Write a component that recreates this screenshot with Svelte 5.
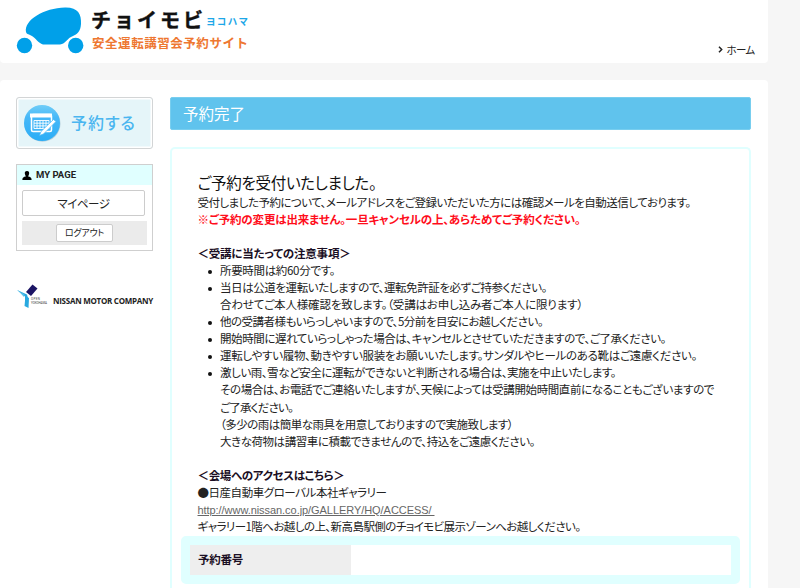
<script>
  const notes = [
    [{ text: '所要時間は約60分です。', width: 115 }],
    [
      { text: '当日は公道を運転いたしますので、運転免許証を必ずご持参ください。', width: 327 },
      { text: '合わせてご本人様確認を致します。（受講はお申し込み者ご本人に限ります）', width: 363 },
    ],
    [{ text: '他の受講者様もいらっしゃいますので、5分前を目安にお越しください。', width: 323 }],
    [{ text: '開始時間に遅れていらっしゃった場合は、キャンセルとさせていただきますので、ご了承ください。', width: 446 }],
    [{ text: '運転しやすい履物、動きやすい服装をお願いいたします。サンダルやヒールのある靴はご遠慮ください。', width: 477 }],
    [
      { text: '激しい雨、雪など安全に運転ができないと判断される場合は、実施を中止いたします。', width: 396 },
      { text: 'その場合は、お電話でご連絡いたしますが、天候によっては受講開始時間直前になることもございますので', width: 494 },
      { text: 'ご了承ください。', width: 73 },
      { text: '（多少の雨は簡単な雨具を用意しておりますので実施致します）', width: 293 },
      { text: '大きな荷物は講習車に積載できませんので、持込をご遠慮ください。', width: 315 },
    ],
  ];

  // spread the characters so that the line takes the given width
  function fit(node, width) {
    requestAnimationFrame(() => {
      const natural = node.getBoundingClientRect().width;
      const count = [...node.textContent].length;
      node.style.letterSpacing = `${(width - natural) / count}px`;
    });
  }
</script>

<header class="header">
  <svg class="logo" width="240" height="58" viewBox="0 -6 240 58">
    <g fill="#00a0e9">
      <circle cx="8.500" cy="39.500" r="7.700" />
      <circle cx="59.700" cy="39.500" r="7.700" />
      <path d="M10 26 C8 14 28 2 49 1.500 C62 1.200 65.500 8 65 18 C64.500 26 61 28 57 30 C51 32 50 38 44 38.500 L27 38.500 C22 37 20 32 15 29.500 C12 28 10.500 28 10 26 Z" />
    </g>
    <text class="logo-name" x="75" y="22" textLength="112">チョイモビ</text>
    <text class="logo-area" x="190" y="18.500" textLength="42">ヨコハマ</text>
    <text class="logo-sub" x="76" y="41.500" textLength="156">安全運転講習会予約サイト</text>
  </svg>
  <a class="home" href="#home">
    <svg width="5" height="7" viewBox="0 0 5 7"><path d="M1 .7 L3.700 3.500 L1 6.300" fill="none" stroke="#222" stroke-width="1.500" /></svg>
    <span use:fit={28}>ホーム</span>
  </a>
</header>

<div class="page">
  <aside class="side">
    <a class="reserve" href="#reserve">
      <svg width="40" height="40" viewBox="0 0 40 40">
        <defs>
          <linearGradient id="disc" x1="0" y1="0" x2="0" y2="1">
            <stop offset="0" stop-color="#6fcdf8" />
            <stop offset="0.350" stop-color="#46b8f8" />
            <stop offset="1" stop-color="#2badf6" />
          </linearGradient>
        </defs>
        <circle cx="20.500" cy="20.700" r="18" fill="#b5cfdb" />
        <circle cx="20" cy="20" r="18" fill="url(#disc)" />
        <rect x="9.500" y="11.500" width="20" height="17" rx="1.500" fill="#43b6f7" stroke="#fff" stroke-width="1.500" />
        <path d="M8 10.500 H30 V14.500 H8 Z" fill="#fff" />
        <path d="M12 17.500 H27 V25.500 H12 Z M12 20.200 H27 M12 22.900 H27 M15 17.500 V25.500 M18 17.500 V25.500 M21 17.500 V25.500 M24 17.500 V25.500" fill="none" stroke="#fff" stroke-width=".9" />
        <path d="M34 18.500 L21.500 31 L17.500 32.500 L19 28.500 L31.500 16.500 Z" fill="#fff" stroke="#43b6f7" stroke-width=".7" />
      </svg>
      <span use:fit={65}>予約する</span>
    </a>

    <section class="mypage">
      <h2>
        <svg width="10" height="9" viewBox="0 0 10 9"><path d="M5 0 C7 0 7.600 1.500 7 3.300 C6.700 4.500 6.300 4.700 6.300 5.500 C8 6 9.600 6.200 9.600 9 H.4 C.4 6.200 2 6 3.700 5.500 C3.700 4.700 3.300 4.500 3 3.300 C2.400 1.500 3 0 5 0 Z" /></svg>
        <span use:fit={40}>MY PAGE</span>
      </h2>
      <a class="my-button" href="#mypage"><span use:fit={52}>マイページ</span></a>
      <div class="logout">
        <a href="#logout"><span use:fit={39}>ログアウト</span></a>
      </div>
    </section>

    <div class="sponsors">
      <svg width="31" height="25" viewBox="0 0 31 25">
        <path d="M15.500 .5 L20.500 4.500 L14 12 L9 8 Z" fill="#1b1464" />
        <path d="M0 6 L10 10.500 L11 14 L8 22 L8 12.500 Z" fill="#2aa7df" />
        <path d="M.5 6 L7.500 10.500 L7 13 Z" fill="#55bfe8" />
        <path d="M8.500 12 L12 14 L11.500 24 L7.500 22 Z" fill="#29a9e0" />
        <text class="tiny" x="14" y="16" textLength="9">OPEN</text>
        <text class="tiny" x="14" y="20" textLength="16">YOKOHAMA</text>
      </svg>
      <span class="nissan" use:fit={100}>NISSAN MOTOR COMPANY</span>
    </div>
  </aside>

  <main class="main">
    <h1><span use:fit={62}>予約完了</span></h1>

    <div class="box">
      <div class="message">
        <p class="lead"><span use:fit={179}>ご予約を受付いたしました。</span></p>
        <p><span use:fit={493}>受付しました予約について、メールアドレスをご登録いただいた方には確認メールを自動送信しております。</span></p>
        <p class="warn"><span use:fit={383}>※ご予約の変更は出来ません。一旦キャンセルの上、あらためてご予約ください。</span></p>

        <h3><span use:fit={153}>＜受講に当たっての注意事項＞</span></h3>
        <ul>
          {#each notes as lines}
            <li>
              {#each lines as line}
                <div><span use:fit={line.width}>{line.text}</span></div>
              {/each}
            </li>
          {/each}
        </ul>

        <h3><span use:fit={147}>＜会場へのアクセスはこちら＞</span></h3>
        <p><span use:fit={189}>●日産自動車グローバル本社ギャラリー</span></p>
        <p><a class="access" href="#access" use:fit={237}>http://www.nissan.co.jp/GALLERY/HQ/ACCESS/&nbsp;</a></p>
        <p><span use:fit={383}>ギャラリー1階へお越しの上、新高島駅側のチョイモビ展示ゾーンへお越しください。</span></p>
      </div>

      <dl class="number">
        <dt><span use:fit={45}>予約番号</span></dt>
        <dd></dd>
      </dl>
    </div>
  </main>
</div>

<style>
  :global(body) {
    background: #f6f6f6;
    color: #222;
    font-family: 'Noto Sans CJK JP', sans-serif;
    font-size: 11.5px;
    line-height: 17.06px;
    font-feature-settings: 'palt';
  }

  h1, h2, h3, p, ul, dl, dd {
    margin: 0;
    padding: 0;
    font-size: inherit;
  }

  span, .access {
    white-space: nowrap;
  }

  a {
    color: inherit;
    text-decoration: none;
  }

  svg {
    display: block;
    flex: none;
  }

  /* header */
  .header {
    box-sizing: border-box;
    display: flex;
    justify-content: space-between;
    width: 767.5px;
    height: 63px;
    padding: 0 13px 0 16px;
    background: #fff;
    border-radius: 0 0 4px 4px;
  }

  .logo {
    font-feature-settings: normal;
  }

  .logo-name {
    font-size: 20px;
    font-weight: 700;
    fill: #111;
    stroke: #111;
    stroke-width: 0.4px;
  }

  .logo-area {
    font-size: 9.5px;
    font-weight: 700;
    fill: #1da7e8;
  }

  .logo-sub {
    font-size: 12.5px;
    font-weight: 700;
    fill: #ee7731;
  }

  .home {
    display: flex;
    align-items: center;
    gap: 4px;
    height: 17px;
    margin-top: 41px;
    font-size: 10.5px;
  }

  /* page */
  .page {
    box-sizing: border-box;
    display: flex;
    gap: 17px;
    width: 767.5px;
    height: 508px;
    margin-top: 17px;
    padding: 17px 17px 0 16px;
    background: #fff;
    border-radius: 4px 4px 0 0;
  }

  .side {
    flex: none;
    width: 137px;
  }

  .reserve {
    box-sizing: border-box;
    display: flex;
    align-items: center;
    gap: 9px;
    height: 52px;
    padding-left: 5px;
    background: #e5f5f9;
    border: 1px solid #d3d5d6;
    border-radius: 3px;
    box-shadow: inset 0 0 0 1.5px #fff;
    color: #4ab6f0;
    font-size: 16px;
    font-weight: 500;
  }

  .mypage {
    box-sizing: border-box;
    height: 87px;
    margin-top: 15px;
    border: 1px solid #cfcfcf;
  }

  .mypage h2 {
    display: flex;
    align-items: center;
    gap: 4px;
    height: 20px;
    padding-left: 5px;
    background: #e0ffff;
    font: 700 9.5px/20px Roboto, sans-serif;
  }

  .my-button {
    box-sizing: border-box;
    display: block;
    width: 123px;
    height: 26px;
    margin: 5px 0 0 5px;
    border: 1px solid #ccc;
    border-radius: 2px;
    text-align: center;
    line-height: 25px;
  }

  .logout {
    box-sizing: border-box;
    display: flex;
    justify-content: center;
    width: 125px;
    height: 24px;
    margin: 5px 0 0 5px;
    padding-top: 3px;
    background: #ebebeb;
  }

  .logout a {
    box-sizing: border-box;
    width: 57px;
    height: 18px;
    background: #fff;
    border: 1px solid #ccc;
    border-radius: 2px;
    text-align: center;
    font-size: 9px;
    line-height: 15px;
  }

  .sponsors {
    display: flex;
    align-items: center;
    gap: 5px;
    margin-top: 33px;
  }

  .sponsors svg {
    margin-left: 1px;
  }

  .tiny {
    font: 3px Roboto, sans-serif;
    fill: #444;
  }

  .nissan {
    padding-top: 8px;
    font: 700 8px/10px 'Open Sans', sans-serif;
  }

  /* main column */
  .main {
    flex: none;
    width: 580.5px;
  }

  .main h1 {
    box-sizing: border-box;
    height: 33px;
    padding-left: 12px;
    background: #60c3ed;
    border: 1px solid #78ceef;
    border-radius: 2px;
    color: #fff;
    font-size: 15.5px;
    font-weight: 400;
    line-height: 30px;
  }

  .box {
    box-sizing: border-box;
    height: 441px;
    margin-top: 17px;
    padding: 24px 9px 0;
    border: 2px solid #e0ffff;
    border-bottom: 0;
    border-radius: 5px 5px 0 0;
  }

  .message {
    padding: 0 16.5px;
  }

  .message p, .message h3, .message div {
    height: 17.06px;
  }

  .message .lead {
    height: 21px;
    color: #111;
    font-size: 15.5px;
    line-height: 18px;
  }

  .message .warn {
    color: #ff0d1b;
    font-weight: 700;
  }

  .message h3 {
    margin-top: 17px;
    color: #1b0f24;
    font-weight: 700;
  }

  .message ul {
    padding-left: 22.5px;
    list-style: none;
  }

  .message li {
    position: relative;
  }

  .message li::before {
    content: '';
    position: absolute;
    top: 8px;
    left: -12px;
    width: 4px;
    height: 4px;
    background: #111;
    border-radius: 50%;
  }

  .access {
    color: #666;
    font-family: 'Liberation Sans', sans-serif;
    font-size: 11px;
    text-decoration: underline;
  }

  .number {
    display: flex;
    height: 30px;
    margin-top: 1px;
    border: 9px solid #e0ffff;
    border-radius: 5px;
  }

  .number dt {
    width: 161px;
    padding-left: 8px;
    box-sizing: border-box;
    background: #eee;
    color: #1b0f24;
    font-weight: 700;
    line-height: 29px;
  }
</style>
